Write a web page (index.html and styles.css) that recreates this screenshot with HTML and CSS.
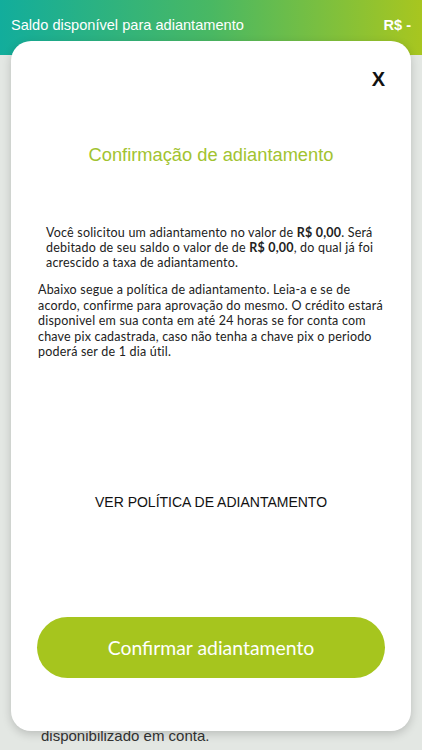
FILE: index.html
```html
<!DOCTYPE html>
<html lang="pt-BR">
<head>
  <meta charset="UTF-8" />
  <meta name="viewport" content="width=device-width, initial-scale=1.0"/>
  <title>Adiantamento</title>
  <link rel="stylesheet" href="styles.css">
</head>
<body>

  <div class="top-bar">
    <span>Saldo disponível para adiantamento</span>
    <span class="balance">R$ -</span>
  </div>

  <div class="page-body">
    <p class="page-note">O valor solicitado será<br>disponibilizado em conta.</p>
  </div>

  <div class="modal">
    <div class="close">X</div>

    <h2 class="modal-title">Confirmação de adiantamento</h2>

    <p class="summary">
      Você solicitou um adiantamento no valor de <b>R$ 0,00</b>. Será
      debitado de seu saldo o valor de de <b>R$ 0,00</b>, do qual já foi
      acrescido a taxa de adiantamento.
    </p>

    <p class="policy-text">
      Abaixo segue a política de adiantamento. Leia-a e se de
      acordo, confirme para aprovação do mesmo. O crédito estará
      disponivel em sua conta em até 24 horas se for conta com
      chave pix cadastrada, caso não tenha a chave pix o periodo
      poderá ser de 1 dia útil.
    </p>

    <div class="policy-link">VER POLÍTICA DE ADIANTAMENTO</div>

    <button class="confirm-btn">Confirmar adiantamento</button>
  </div>

</body>
</html>
```

FILE: styles.css
```css
body {
  font-family: "Liberation Sans", Arial, sans-serif;
  background-color: #e3e7e3;
  margin: 0;
  height: 750px;
  overflow: hidden;
}

.top-bar {
  height: 55px;
  padding: 0 11px;
  box-sizing: border-box;
  display: flex;
  justify-content: space-between;
  align-items: flex-start;
  padding-top: 17px;
  color: white;
  font-size: 14.6px;
  background: linear-gradient(90deg, #12ad9c 0%, #49b863 50%, #a8c61f 100%);
}

.balance {
  font-weight: bold;
}

.page-body {
  height: 695px;
  display: flex;
  flex-direction: column;
  justify-content: flex-end;
}

.page-note {
  margin: 0 0 5px 41px;
  font-size: 15px;
  line-height: 18px;
  color: #333;
}

.modal {
  position: absolute;
  top: 41px;
  left: 11px;
  width: 400px;
  height: 690px;
  background-color: white;
  border-radius: 20px;
  box-shadow: 0 3px 10px rgba(0, 0, 0, 0.18);
  display: flex;
  flex-direction: column;
}

.close {
  align-self: flex-end;
  margin: 28px 26px 0 0;
  font-size: 20px;
  line-height: 20px;
  font-weight: bold;
  color: #111;
}

.modal-title {
  margin: 55px 0 0;
  text-align: center;
  font-size: 18.3px;
  line-height: 22px;
  font-weight: normal;
  color: #a2c330;
}

.summary,
.policy-text {
  font-family: Lato, sans-serif;
  font-size: 12.5px;
  letter-spacing: 0.2px;
  color: #222;
  margin: 0;
}

.summary {
  margin-top: 59px;
  padding: 0 30px 0 35px;
  line-height: 15px;
}

.policy-text {
  margin-top: 12px;
  padding: 0 24px 0 27px;
  line-height: 15.5px;
}

.policy-link {
  margin-top: 133px;
  text-align: center;
  font-size: 14px;
  line-height: 18px;
  color: #111;
}

.confirm-btn {
  margin: 106px 26px 0;
  height: 61px;
  border: none;
  border-radius: 31px;
  background-color: #a6c51e;
  color: white;
  font-family: Lato, sans-serif;
  font-size: 19.4px;
}
```
